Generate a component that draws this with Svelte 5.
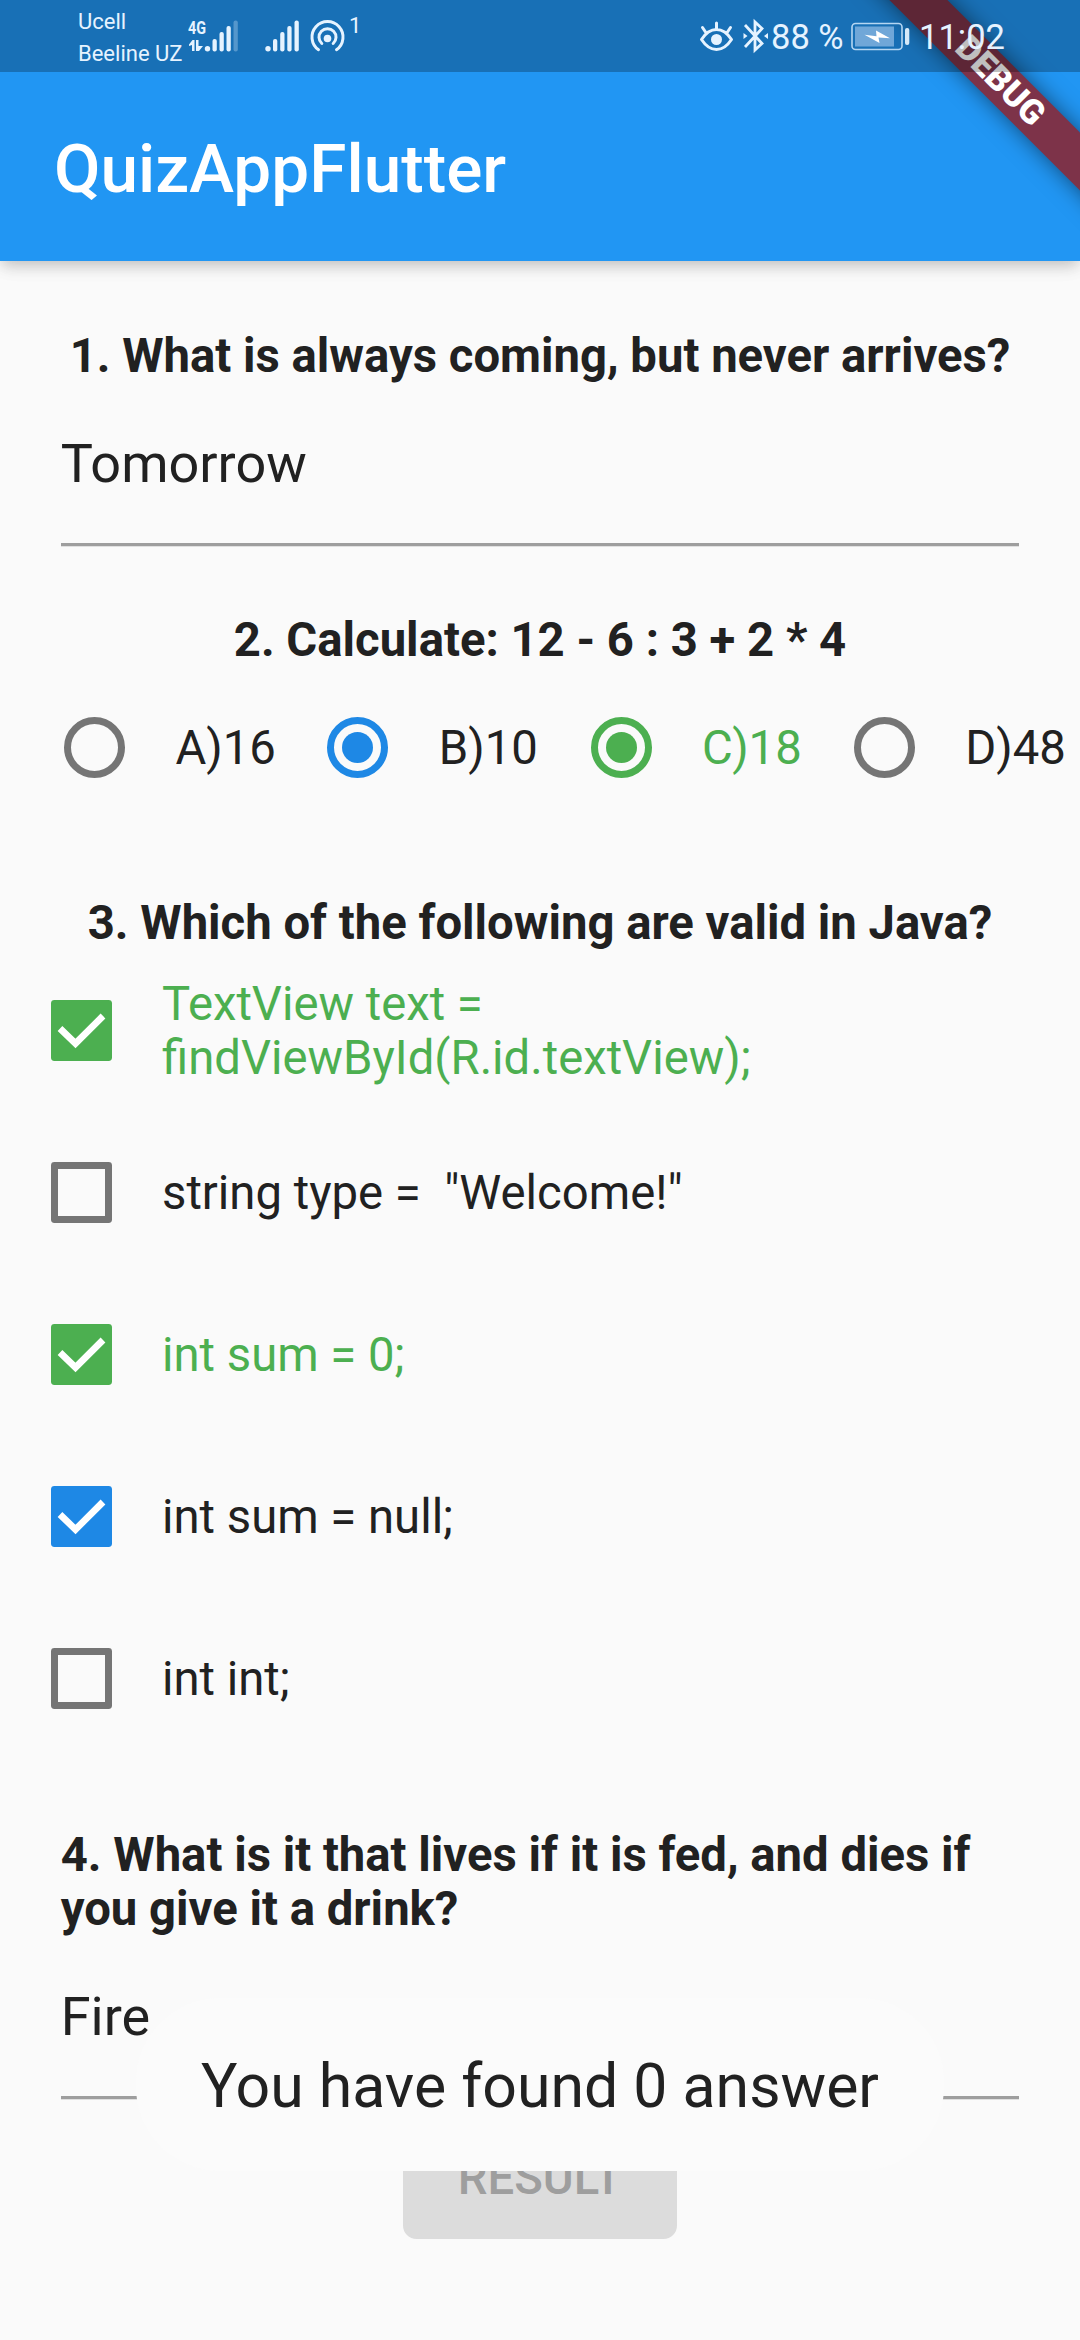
<script>
  const radios = [
    { label: 'A)16', tone: 'off' },
    { label: 'B)10', tone: 'blue' },
    { label: 'C)18', tone: 'green', right: true },
    { label: 'D)48', tone: 'off' }
  ];
  const checks = [
    { label: 'TextView text =\nfindViewById(R.id.textView);', tone: 'green', right: true },
    { label: 'string type =  "Welcome!"', tone: 'off' },
    { label: 'int sum = 0;', tone: 'green', right: true },
    { label: 'int sum = null;', tone: 'blue' },
    { label: 'int int;', tone: 'off' }
  ];
</script>

<div class="screen">
  <header class="appbar">
    <h1>QuizAppFlutter</h1>
    <div class="corner"><div class="banner">DEBUG</div></div>
    <div class="status">
      <div class="carriers"><span>Ucell</span><span>Beeline UZ</span></div>
      <svg class="net" width="198" height="72" viewBox="0 0 198 72">
        <text class="gen" x="0" y="34" textLength="18" lengthAdjust="spacingAndGlyphs">4G</text>
        <g fill="#e6f3ff">
          <path d="M1 44.500L4.500 40H6.500V51H4V45L1 46zM8 40h2.500v6l4.500 0-4 5h-3z" />
          <circle cx="19.500" cy="48.700" r="2.700" />
          <rect x="24.500" y="39" width="4.300" height="12.500" rx="2" />
          <rect x="31.500" y="32" width="4.300" height="19.500" rx="2" />
          <rect x="38.500" y="26" width="4.300" height="25.500" rx="2" />
          <rect x="45.500" y="20.500" width="4.300" height="31" rx="2" opacity=".3" />
          <circle cx="80" cy="48.700" r="2.700" />
          <rect x="85" y="39" width="4.300" height="12.500" rx="2" />
          <rect x="92.200" y="32" width="4.300" height="19.500" rx="2" />
          <rect x="99.300" y="26" width="4.300" height="25.500" rx="2" />
          <rect x="106.500" y="20.500" width="4.300" height="31" rx="2" />
          <circle cx="139.500" cy="38.500" r="3.800" />
        </g>
        <g fill="none" stroke="#e6f3ff" stroke-width="3" stroke-linecap="round">
          <path d="M130.500 49.700a15.500 15.500 0 1 1 18 0" />
          <path d="M133.800 43.500a8.500 8.500 0 1 1 11.400 0" />
        </g>
        <text class="one" x="161" y="33">1</text>
      </svg>
      <span class="grow"></span>
      <svg class="eye" width="70" height="72" viewBox="0 0 70 72" fill="none" stroke="#e6f3ff" stroke-width="3" stroke-linecap="round" stroke-linejoin="round">
        <path d="M2.500 39.500Q9 29.500 17.500 29.500T32.500 39.500Q26 49.500 17.500 49.500T2.500 39.500zM17.500 28.500v-5.500M6.500 32l-3-4.500M28.500 32l3-4.500" />
        <circle cx="17.500" cy="39.500" r="5.500" fill="#e6f3ff" stroke="none" />
        <path d="M46 25L63 43.500l-7 6.500V22l7 6.500L46 47" stroke-width="2.800" stroke-linejoin="miter" stroke-linecap="butt" />
        <path d="M44.500 33l4 3-4 3zM69 33l-4 3 4 3z" fill="#e6f3ff" stroke="none" />
      </svg>
      <span class="pct">88 %</span>
      <svg class="batt" width="60" height="72" viewBox="0 0 60 72">
        <rect x="1" y="23.500" width="50" height="26" rx="3.500" fill="none" stroke="#b5d6f2" stroke-width="1.600" />
        <rect x="4" y="26.500" width="39" height="20" fill="#70a7d8" />
        <rect x="54" y="28" width="4.300" height="17" rx="2" fill="#d6e9f8" />
        <path d="M13.500 34.700L25.500 36.300 25 30.500 39 38.200 27.500 37.500 28.500 43z" fill="#fff" />
      </svg>
      <span class="time">11:02</span>
    </div>
  </header>

  <main>
    <h2 class="q1">1. What is always coming, but never arrives?</h2>
    <div class="field">Tomorrow</div>
    <h2 class="q2">2. Calculate: 12 - 6 : 3 + 2 * 4</h2>
    <div class="radios">
      {#each radios as r}
        <div class="option" class:right={r.right}>
          <span class="cell"><span class="radio {r.tone}"></span></span>
          <span class="label">{r.label}</span>
        </div>
      {/each}
    </div>
    <h2 class="q3">3. Which of the following are valid in Java?</h2>
    {#each checks as c}
      <div class="option" class:right={c.right}>
        <span class="cell">
          <span class="box {c.tone}">
            {#if c.tone !== 'off'}
              <svg width="61" height="61" viewBox="0 0 61 61"><path d="M9 28.500L24.500 43.500L52 16" fill="none" stroke="#fff" stroke-width="6.750" /></svg>
            {/if}
          </span>
        </span>
        <span class="label">{c.label}</span>
      </div>
    {/each}
    <h2 class="q4">4. What is it that lives if it is fed, and dies if you give it a drink?</h2>
    <div class="field">Fire</div>
    <button disabled>RESULT</button>
  </main>
  <div class="toast">You have found 0 answer</div>
</div>

<style>
  :global(body) { margin: 0; background: #fafafa; }
  .screen {
    position: relative; width: 1080px; height: 2340px; overflow: hidden;
    background: #fafafa; color: #212121;
    font: 400 47.25px/54px Roboto, sans-serif;
  }
  .appbar {
    position: relative; box-sizing: border-box; height: 261px; padding: 76px 54px 0;
    display: flex; align-items: center; background: #2196f3; color: #fff;
    box-shadow: 0 6px 13px -3px rgba(0,0,0,.16), 0 8px 16px rgba(0,0,0,.06), 0 3px 24px rgba(0,0,0,.05);
  }
  h1 { margin: 0; font-size: 67.5px; line-height: 80px; font-weight: 500; }
  .corner { position: absolute; top: 0; right: 0; width: 330px; height: 261px; overflow: hidden; }
  .banner {
    position: absolute; left: 79.500px; top: 60.700px; width: 340px; height: 40.500px;
    transform: rotate(45deg); background: #7d3349; text-align: center;
    font-size: 34.400px; font-weight: 900; line-height: 38px;
    box-shadow: 0 0 22px rgba(0,0,0,.5);
  }
  .status {
    position: absolute; inset: 0 0 auto 0; height: 72px; box-sizing: border-box; padding: 0 76px 0 78px;
    display: flex; align-items: center; background: rgba(0,0,0,.25); color: #e6f3ff;
  }
  .carriers { display: flex; flex-direction: column; width: 110px; font-size: 22px; line-height: 32px; white-space: nowrap; padding-top: 3px; }
  .net { display: block; }
  .gen { font: 700 19px Roboto, sans-serif; fill: #e6f3ff; }
  .one { font: 400 22px Roboto, sans-serif; fill: #e6f3ff; }
  .grow { flex: 1; }
  .eye { margin-right: 2px; }
  .pct, .time { font-size: 34.500px; line-height: 72px; padding-top: 1px; white-space: pre; }
  .pct { width: 80px; }
  .time { width: 85px; }
  .batt { margin-right: 8px; }

  main { display: flex; flex-direction: column; }
  h2 { margin: 0; font-size: 47.250px; line-height: 54px; font-weight: 700; text-align: center; white-space: nowrap; }
  .q1 { margin-top: 68px; }
  .q2 { margin-top: 67px; }
  .q3 { margin-top: 68px; }
  .q4 { margin: 69px 60px 0 60.750px; text-align: left; white-space: normal; }
  .field {
    box-sizing: border-box; margin: 49px 60.750px 0; height: 114px; border-bottom: 3px solid #9e9e9e;
    box-shadow: 0 1px 0 #e0e0e0; font-size: 54px; line-height: 63px;
  }
  .radios { display: grid; grid-template-columns: repeat(4, 263.250px); padding-left: 13.500px; margin-top: -1px; }
  .option { display: flex; align-items: center; height: 162px; white-space: pre; }
  .label { padding-top: 2px; }
  .right { color: #4caf50; }
  .cell { width: 162px; height: 162px; display: grid; place-items: center; flex: none; }
  .radio { box-sizing: border-box; width: 61px; height: 61px; border: 7px solid; border-radius: 50%; padding: 8px; background-clip: content-box; }
  .radio.off { color: #757575; }
  .radio.blue { color: #1e88e5; background-color: #1e88e5; }
  .radio.green { color: #4caf50; background-color: #4caf50; }
  .box { box-sizing: border-box; width: 61px; height: 61px; border-radius: 3.400px; }
  .box svg { display: block; }
  .box.off { border: 7px solid #757575; }
  .box.blue { background: #1e88e5; }
  .box.green { background: #4caf50; }
  .q3 + .option { margin-top: -1px; }
  button {
    align-self: center; margin: 18px 0 0; padding: 0; border: 0; width: 274px; height: 121.500px; border-radius: 13.500px;
    background: #dcdcdc; color: #9e9e9e; font: 500 47.250px/54px Roboto, sans-serif;
  }
  .toast {
    position: absolute; left: 136px; top: 1998px; width: 808px; height: 173px; border-radius: 84px;
    background: #fbfbfb; text-align: center; font-size: 60.750px; line-height: 177px; white-space: nowrap;
  }
</style>
